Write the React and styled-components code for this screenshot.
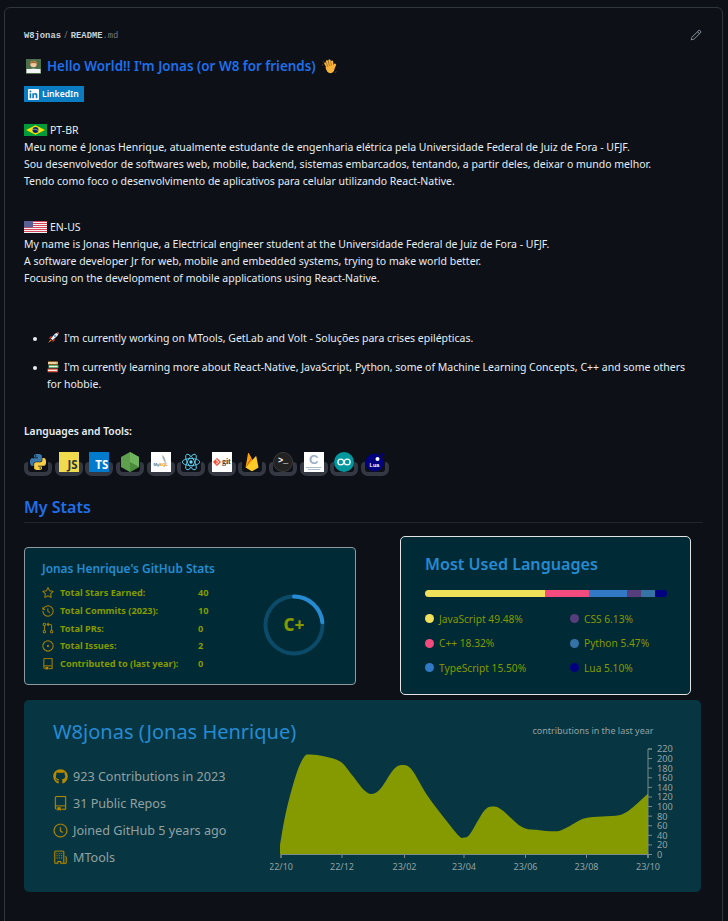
import React from "react";
import styled, { createGlobalStyle } from "styled-components";
import {
  GoStar,
  GoHistory,
  GoGitPullRequest,
  GoIssueOpened,
  GoRepo,
  GoClock,
  GoOrganization,
  GoPencil,
} from "react-icons/go";
import { FaGithub } from "react-icons/fa";
import { SiLinkedin, SiGit } from "react-icons/si";

const sans = `"Noto Sans", "Open Sans", "Liberation Sans", sans-serif`;

const Global = createGlobalStyle`
  html, body {
    margin: 0;
    padding: 0;
    height: 921px;
    overflow: hidden;
    background: #0d1117;
    color: #e6edf3;
    font-family: ${sans};
  }
`;

const Panel = styled.div`
  box-sizing: border-box;
  width: 719px;
  height: 960px;
  margin: 7px 0 0 4px;
  padding: 19px 19px 0 19px;
  border: 1px solid #30363d;
  border-radius: 6px;
`;

const FileBar = styled.div`
  display: flex;
  align-items: center;
  justify-content: space-between;
  height: 16px;
  padding-right: 1px;
  font-family: "Liberation Mono", monospace;
  font-size: 8.8px;
  color: #c9d1d9;
  svg {
    color: #8b949e;
    font-size: 12px;
  }
`;

const Crumb = styled.span`
  font-weight: 700;
  b {
    font-weight: 400;
    color: #6e7681;
  }
  i {
    font-family: ${sans};
    font-style: normal;
    font-weight: 400;
    color: #6e7681;
    padding: 0 1px;
  }
`;

const Title = styled.h1`
  display: flex;
  align-items: center;
  gap: 6px;
  margin: 13px 0 0 2px;
  height: 20px;
  font-size: 13.4px;
  font-weight: 600;
  color: #1f6feb;
`;

const Badge = styled.div`
  display: inline-flex;
  align-items: center;
  gap: 3px;
  box-sizing: border-box;
  width: 60px;
  height: 16px;
  margin-top: 10px;
  padding-left: 4px;
  background: #0a7cc1;
  color: #fff;
  font-size: 8.6px;
  font-weight: 600;
  svg {
    font-size: 11px;
  }
`;

const Block = styled.div`
  margin-top: ${(p) => p.$top}px;
  font-size: 10.5px;
  line-height: 17px;
  color: #e6edf3;
`;

const Line = styled.div`
  white-space: nowrap;
`;

const FlagLine = styled.div`
  display: flex;
  align-items: flex-end;
  gap: 3px;
  height: 17px;
  svg {
    margin-bottom: 3px;
  }
`;

const List = styled.ul`
  margin: 43px 0 0 0;
  padding: 0 14px 0 23px;
  font-size: 10.5px;
  line-height: 17px;
  li {
    margin-bottom: 12px;
  }
  li svg {
    vertical-align: -2px;
    margin-right: 5px;
  }
`;

const ToolsLabel = styled.div`
  margin-top: 30px;
  font-size: 10.3px;
  line-height: 17px;
  font-weight: 600;
  color: #e6edf3;
`;

const Tools = styled.div`
  display: flex;
  gap: 2.65px;
  margin-top: 12px;
`;

const Tool = styled.div`
  position: relative;
  width: 28px;
  height: 24px;
  display: flex;
  justify-content: center;
  &::before {
    content: "";
    position: absolute;
    left: 0;
    right: 0;
    top: 10px;
    bottom: 0;
    box-sizing: border-box;
    border: 4px solid #343842;
    border-top: none;
    border-radius: 4px 4px 7px 7px;
  }
`;

const Tile = styled.div`
  position: relative;
  box-sizing: border-box;
  width: 20px;
  height: 20px;
  display: flex;
  align-items: ${(p) => (p.$low ? "flex-end" : "center")};
  justify-content: ${(p) => (p.$low ? "flex-end" : "center")};
  padding: ${(p) => (p.$low ? "0 1px 0 0" : "0")};
  background: ${(p) => p.$bg};
  border-radius: ${(p) => (p.$round ? "50%" : "0")};
  color: ${(p) => p.$fg || "#fff"};
  font-size: ${(p) => p.$size || 10}px;
  font-weight: 700;
  line-height: ${(p) => (p.$low ? "14px" : "1")};
`;

const ToolSvg = styled.svg`
  position: relative;
  display: block;
  width: 20px;
  height: 20px;
`;

const Section = styled.h2`
  margin: 19px 0 0 0;
  padding-bottom: 3px;
  height: 24px;
  font-size: 16px;
  line-height: 24px;
  font-weight: 600;
  color: #1f6feb;
  border-bottom: 1px solid #21262d;
`;

const CardRow = styled.div`
  display: flex;
  align-items: flex-start;
  gap: 44px;
  margin-top: 13px;
`;

const StatsCard = styled.div`
  box-sizing: border-box;
  width: 332px;
  height: 138px;
  margin-top: 11px;
  padding: 13px 17px;
  display: flex;
  justify-content: space-between;
  background: #002b36;
  border: 1px solid #8d9a9f;
  border-radius: 4px;
`;

const CardTitle = styled.div`
  font-size: ${(p) => p.$size}px;
  font-weight: 600;
  line-height: 1.3;
  color: #268bd2;
  white-space: nowrap;
`;

const StatRows = styled.div`
  margin-top: 8px;
  display: grid;
  grid-template-columns: 18px 138px auto;
  grid-auto-rows: 17.7px;
  align-items: center;
  font-size: 9.2px;
  font-weight: 700;
  color: #859900;
  svg {
    color: #b58900;
    font-size: 12px;
    display: block;
    stroke: currentColor;
    stroke-width: 0.35;
  }
`;

const Ring = styled.div`
  position: relative;
  margin: 32px 12px 0 0;
  width: 64px;
  height: 64px;
`;

const Grade = styled.div`
  position: absolute;
  inset: 0;
  display: flex;
  align-items: center;
  justify-content: center;
  font-size: 17px;
  font-weight: 800;
  color: #859900;
`;

const LangCard = styled.div`
  box-sizing: border-box;
  width: 291px;
  height: 159px;
  padding: 17px 24px 0 24px;
  background: #002b36;
  border: 1px solid #e4e2e2;
  border-radius: 5px;
`;

const LangBar = styled.div`
  display: flex;
  width: 242px;
  height: 7px;
  margin-top: 16px;
  border-radius: 4px;
  overflow: hidden;
`;

const LangPart = styled.div`
  background: ${(p) => p.$color};
`;

const LangGrid = styled.div`
  display: grid;
  grid-template-columns: 145px auto;
  grid-auto-rows: 24.6px;
  margin-top: 9px;
  align-items: center;
`;

const LangItem = styled.div`
  display: flex;
  align-items: center;
  gap: 5px;
  font-size: 10.2px;
  color: #859900;
  white-space: nowrap;
`;

const Dot = styled.span`
  width: 9px;
  height: 9px;
  border-radius: 50%;
  background: ${(p) => p.$color};
`;

const ProfileCard = styled.div`
  display: flex;
  box-sizing: border-box;
  width: 677px;
  height: 192px;
  margin-top: 5px;
  padding: 20px 0 0 29px;
  background: #073642;
  border-radius: 5px;
`;

const ProfileInfo = styled.div`
  width: 217px;
  flex: none;
`;

const ProfileName = styled.div`
  font-size: 20px;
  line-height: 24px;
  color: #268bd2;
  white-space: nowrap;
`;

const ProfileRows = styled.div`
  margin-top: 19px;
`;

const ProfileRow = styled.div`
  display: flex;
  align-items: center;
  gap: 5px;
  height: 27px;
  font-size: 12.6px;
  color: #93a1a1;
  white-space: nowrap;
  svg {
    color: #b58900;
    font-size: 15px;
    flex: none;
    stroke: currentColor;
    stroke-width: 0.3;
  }
`;

const ChartSvg = styled.svg`
  display: block;
  flex: none;
  text {
    font-family: ${sans};
    fill: #93a1a1;
  }
`;

const PY_TOP =
  "M14.25.18l.9.2.73.26.59.3.45.32.34.34.25.34.16.33.1.3.04.26.02.2-.01.13V8.5l-.05.63-.13.55-.21.46-.26.38-.3.31-.33.25-.35.19-.35.14-.33.1-.3.07-.26.04-.21.02H8.77l-.69.05-.59.14-.5.22-.41.27-.33.32-.27.35-.2.36-.15.37-.1.35-.07.32-.04.27-.02.21v3.06H3.17l-.21-.03-.28-.07-.32-.12-.35-.18-.36-.26-.36-.36-.35-.46-.32-.59-.28-.73-.21-.88-.14-1.05-.05-1.23.06-1.22.16-1.04.24-.87.32-.71.36-.57.4-.44.42-.33.42-.24.4-.16.36-.1.32-.05.24-.01h.16l.06.01h8.16v-.83H6.18l-.01-2.75-.02-.37.05-.34.11-.31.17-.28.25-.26.31-.23.38-.2.44-.18.51-.15.58-.12.64-.1.71-.06.77-.04.84-.02 1.27.05zm-6.3 1.98l-.23.33-.08.41.08.41.23.34.33.22.41.09.41-.09.33-.22.23-.34.08-.41-.08-.41-.23-.33-.33-.22-.41-.09-.41.09z";
const PY_BOTTOM =
  "M21.04 6.11l.28.06.32.12.35.18.36.27.36.35.35.47.32.59.28.73.21.88.14 1.04.05 1.23-.06 1.23-.16 1.04-.24.86-.32.71-.36.57-.4.45-.42.33-.42.24-.4.16-.36.09-.32.05-.24.02-.16-.01h-8.22v.82h5.84l.01 2.76.02.36-.05.34-.11.31-.17.29-.25.25-.31.24-.38.2-.44.17-.51.15-.58.13-.64.09-.71.07-.77.04-.84.01-1.27-.04-1.07-.14-.9-.2-.73-.25-.59-.3-.45-.33-.34-.34-.25-.34-.16-.33-.1-.3-.04-.25-.02-.2.01-.13v-5.34l.05-.64.13-.54.21-.46.26-.38.3-.32.33-.24.35-.2.35-.14.33-.1.3-.06.26-.04.21-.02.13-.01h5.84l.69-.05.59-.14.5-.21.41-.28.33-.32.27-.35.2-.36.15-.36.1-.35.07-.32.04-.28.02-.21V6.07h2.09l.14.01zm-6.47 14.25l-.23.33-.08.41.08.41.23.33.33.23.41.08.41-.08.33-.23.23-.33.08-.41-.08-.41-.23-.33-.33-.23-.41-.08-.41.08z";

const CoderEmoji = () => (
  <svg width="15" height="15" viewBox="0 0 15 15">
    <rect width="15" height="15" fill="#4f6f4c" />
    <circle cx="7.5" cy="5" r="3.2" fill="#f3c99b" />
    <path d="M4 4.8C4.2 1.2 10.8 1.2 11 4.8 9.2 3.6 5.800 3.600 4 4.800z" fill="#a0682c" />
    <path d="M2 12C2.500 8.500 12.500 8.500 13 12z" fill="#c9ced4" />
    <rect x=".5" y="10" width="14" height="4" fill="#f2f4f7" />
  </svg>
);

const WaveEmoji = () => (
  <svg width="15" height="15" viewBox="0 0 15 15">
    <g stroke="#f7b23b" strokeWidth="2.3" strokeLinecap="round">
      <line x1="5.5" y1="8" x2="3.3" y2="4.5" />
      <line x1="7" y1="7" x2="5" y2="2.4" />
      <line x1="8.8" y1="6.5" x2="7.4" y2="1.5" />
      <line x1="10.5" y1="6.5" x2="10" y2="2.6" />
      <line x1="11.5" y1="9" x2="13" y2="5.8" />
    </g>
    <path d="M3.5 8 11.5 5.5C13 9 12.8 12 10.5 13.5 7.5 15.3 4.5 13.5 3.5 8z" fill="#f7b23b" />
    <path d="M4.4 4.5 6 8M6.1 3 7.6 7M8.7 2.8 9.4 6.8" stroke="#9c6417" strokeWidth=".6" fill="none" />
    <path d="M1 3.6 2 1.800M.8 6.800.3 5.200M12.800 14l1.600-1.800" stroke="#55402a" strokeWidth=".9" fill="none" />
  </svg>
);

const RocketEmoji = () => (
  <svg width="12" height="12" viewBox="0 0 12 12">
    <path d="M3.8 6.4 8 1.800c1-.8 2.400-1.300 3.600-1.400-.1 1.300-.6 2.600-1.400 3.600L5.600 8.200z" fill="#e8edf2" />
    <path d="M9.4.8c.9-.3 1.600-.4 2.200-.4 0 .7-.1 1.400-.4 2.200z" fill="#d93a30" />
    <circle cx="8" cy="4" r="1" fill="#4b8fd6" />
    <path d="M3.8 6.400 1.600 6.600 3.600 4.200 5.400 4.600zM5.600 8.200 5.400 10.400 7.800 8.400 7.400 6.600z" fill="#c9342b" />
    <path d="M3.6 7.400 1 11l3.600-2.600z" fill="#f2a12e" />
  </svg>
);

const BooksEmoji = () => (
  <svg width="12" height="12" viewBox="0 0 12 12">
    <rect x="1" y=".5" width="10" height="3" rx=".6" fill="#e8a33a" />
    <rect x="1" y="1.4" width="8.5" height="1.2" fill="#f5efe0" />
    <rect x="1.5" y="4" width="10" height="3" rx=".6" fill="#49a36a" />
    <rect x="2" y="4.9" width="8.5" height="1.2" fill="#f5efe0" />
    <rect x=".5" y="7.6" width="10.5" height="3.6" rx=".6" fill="#d9503f" />
    <rect x="1" y="8.7" width="9" height="1.3" fill="#f5efe0" />
  </svg>
);

const BrazilFlag = () => (
  <svg width="23" height="12" viewBox="0 0 23 12">
    <rect width="23" height="12" fill="#009b3a" />
    <polygon points="11.5,1.2 21,6 11.5,10.8 2,6" fill="#fedf00" />
    <circle cx="11.5" cy="6" r="3" fill="#002776" />
    <path d="M8.6 5.400c2-.5 4.200 0 5.800 1.300" stroke="#fff" strokeWidth=".5" fill="none" />
  </svg>
);

const UsFlag = () => (
  <svg width="23" height="12" viewBox="0 0 23 12">
    <rect width="23" height="12" fill="#f4f4f4" />
    {[0, 2, 4, 6, 8, 10].map((y) => (
      <rect key={y} y={y} width="23" height="1" fill="#d6455a" />
    ))}
    <rect width="9" height="6.4" fill="#5a5f94" />
  </svg>
);

const PythonLogo = () => (
  <ToolSvg viewBox="-3 -3 30 30">
    <path d={PY_TOP} fill="#3a78ab" />
    <path d={PY_BOTTOM} fill="#f7cf47" />
  </ToolSvg>
);

const NodeLogo = () => (
  <ToolSvg viewBox="0 0 20 20">
    <polygon points="10,0 19,5 19,15 10,20 1,15 1,5" fill="#5fa04e" />
    <polygon points="10,0 19,5 19,15 10,10" fill="#6fb35c" />
    <polygon points="10,10 19,15 10,20" fill="#4a8a3c" />
  </ToolSvg>
);

const MysqlLogo = () => (
  <ToolSvg viewBox="0 0 20 20">
    <rect width="20" height="20" fill="#fff" />
    <path d="M11 3c2 1 3.400 3.500 3.600 6.500l1.600 2.300-2.500-1.500C12.400 8 11.300 6 11 3z" fill="#a9adb3" />
    <text x="2.4" y="14" fontSize="4.4" fontWeight="700" fontFamily="Liberation Sans" fill="#4a7a9c">
      My
    </text>
    <text x="8" y="14" fontSize="4.4" fontWeight="700" fontFamily="Liberation Sans" fill="#e48e00">
      SQL
    </text>
  </ToolSvg>
);

const ReactLogo = () => (
  <ToolSvg viewBox="-12 -12 24 24">
    <circle r="2" fill="#61dafb" />
    <g stroke="#61dafb" strokeWidth="1" fill="none">
      <ellipse rx="10.5" ry="4.2" />
      <ellipse rx="10.5" ry="4.2" transform="rotate(60)" />
      <ellipse rx="10.5" ry="4.2" transform="rotate(120)" />
    </g>
  </ToolSvg>
);

const FirebaseLogo = () => (
  <ToolSvg viewBox="0 0 20 20">
    <path d="M3.500 15.500 6 1.500c.1-.5.7-.6.9-.2L9.500 6z" fill="#ffa000" />
    <path d="M3.500 15.500 9.500 6 11 8.800z" fill="#f57c00" />
    <path d="M3.500 15.500 13.500 4.400c.3-.3.8-.1.9.3l2.100 10.800L10.600 19c-.4.200-.9.200-1.200 0z" fill="#ffca28" />
  </ToolSvg>
);

const ArduinoLogo = () => (
  <ToolSvg viewBox="0 0 20 20">
    <circle cx="10" cy="10" r="10" fill="#00979d" />
    <g fill="none" stroke="#fff" strokeWidth="1.3">
      <circle cx="6.8" cy="10" r="2.9" />
      <circle cx="13.2" cy="10" r="2.9" />
    </g>
  </ToolSvg>
);

const LuaLogo = () => (
  <ToolSvg viewBox="0 0 20 20">
    <circle cx="9.5" cy="10.5" r="9" fill="#000080" />
    <circle cx="12.5" cy="7" r="2" fill="#fff" />
    <circle cx="17.5" cy="2.5" r="1.8" fill="#000080" />
    <text x="9.5" y="15" textAnchor="middle" fontSize="5.5" fontWeight="700" fontFamily="Liberation Sans" fill="#fff">
      Lua
    </text>
  </ToolSvg>
);

const GitTile = styled(Tile)`
  gap: 1px;
  color: #413934;
  font-size: 8px;
  font-family: "Liberation Serif", serif;
  svg {
    color: #f05033;
    font-size: 8px;
    flex: none;
  }
`;

const CTile = styled(Tile)`
  flex-direction: column;
  color: #9bafc6;
  font-size: 13px;
  font-family: "Liberation Sans", sans-serif;
`;

const TinyLine = styled.span`
  display: block;
  width: ${(p) => p.$w}px;
  height: 1px;
  margin: 1px 0 0;
  background: #a9bcd0;
`;

const TermTile = styled(Tile)`
  font-family: "Liberation Mono", monospace;
  border: 1px solid #3a3a3a;
`;

const tools = [
  <PythonLogo />,
  <Tile $bg="#f0db4f" $fg="#323330" $low $size={11.5}>JS</Tile>,
  <Tile $bg="#007acc" $fg="#fff" $low $size={11.5}>TS</Tile>,
  <NodeLogo />,
  <MysqlLogo />,
  <ReactLogo />,
  <GitTile $bg="#fff"><SiGit />git</GitTile>,
  <FirebaseLogo />,
  <TermTile $bg="#222" $round $size={8.5}>&gt;_</TermTile>,
  <CTile $bg="#fff">C<TinyLine $w={15} /><TinyLine $w={12} /></CTile>,
  <ArduinoLogo />,
  <LuaLogo />,
];

const stats = [
  [GoStar, "Total Stars Earned:", "40"],
  [GoHistory, "Total Commits (2023):", "10"],
  [GoGitPullRequest, "Total PRs:", "0"],
  [GoIssueOpened, "Total Issues:", "2"],
  [GoRepo, "Contributed to (last year):", "0"],
];

const langs = [
  ["JavaScript", 49.48, "#f1e05a"],
  ["C++", 18.32, "#f34b7d"],
  ["TypeScript", 15.5, "#3178c6"],
  ["CSS", 6.13, "#563d7c"],
  ["Python", 5.47, "#3572a5"],
  ["Lua", 5.1, "#000080"],
];

// chart sampled from the contributions curve, in page-like coordinates
const area = [
  [280, 845], [286, 812], [296, 775], [304, 757], [310, 754.5], [325, 756.5], [341, 762],
  [352, 775], [364, 790], [372, 794], [381, 788], [394, 769], [403, 765], [412, 770],
  [427, 795], [445, 819], [459, 836], [464, 837.5], [470, 834], [484, 811], [493, 806.5],
  [502, 810], [522, 827], [538, 830], [556, 831.3], [566, 828], [584, 818.5], [602, 816.5],
  [620, 815], [632, 808], [648, 793.5],
];

const curve = (pts) => {
  let d = `M${pts[0][0]} ${pts[0][1]}`;
  for (let i = 0; i < pts.length - 1; i++) {
    const p0 = pts[i - 1] || pts[i];
    const p1 = pts[i];
    const p2 = pts[i + 1];
    const p3 = pts[i + 2] || p2;
    d += `C${p1[0] + (p2[0] - p0[0]) / 6} ${p1[1] + (p2[1] - p0[1]) / 6} ${p2[0] - (p3[0] - p1[0]) / 6} ${p2[1] - (p3[1] - p1[1]) / 6} ${p2[0]} ${p2[1]}`;
  }
  return d;
};

const xTicks = [
  ["22/10", 281],
  ["22/12", 342],
  ["23/02", 404.5],
  ["23/04", 464],
  ["23/06", 525.5],
  ["23/08", 586.5],
  ["23/10", 648],
];

const yTicks = [0, 20, 40, 60, 80, 100, 120, 140, 160, 180, 200, 220];

const Chart = () => (
  <ChartSvg width="410" height="172" viewBox="270 720 410 172">
    <text x="593" y="734" fontSize="9" textAnchor="middle">contributions in the last year</text>
    <path d={`${curve(area)}L648 854.5L280 854.5Z`} fill="#859900" />
    <path d="M281 858V854.5H648V858M652 749H648V858" stroke="#7b8a8c" strokeWidth="1" fill="none" />
    {xTicks.map(([label, x]) => (
      <g key={label}>
        <line x1={x} x2={x} y1="854.5" y2="858" stroke="#7b8a8c" />
        <text x={x} y="870" fontSize="9" textAnchor="middle">{label}</text>
      </g>
    ))}
    {yTicks.map((v, i) => {
      const y = 854.5 - (i * (854.5 - 749)) / 11;
      return (
        <g key={v}>
          <line x1="648" x2="652" y1={y} y2={y} stroke="#7b8a8c" />
          <text x="657" y={y + 3.4} fontSize="9.2">{v}</text>
        </g>
      );
    })}
  </ChartSvg>
);

export default function App() {
  return (
    <>
      <Global />
      <Panel>
        <FileBar>
          <Crumb>W8jonas<i> / </i>README<b>.md</b></Crumb>
          <GoPencil />
        </FileBar>
        <Title>
          <CoderEmoji />
          <span>Hello World!! I'm Jonas (or W8 for friends)</span>
          <WaveEmoji />
        </Title>
        <Badge><SiLinkedin />LinkedIn</Badge>

        <Block $top={17}>
          <FlagLine><BrazilFlag />PT-BR</FlagLine>
          <Line>Meu nome é Jonas Henrique, atualmente estudante de engenharia elétrica pela Universidade Federal de Juiz de Fora - UFJF.</Line>
          <Line>Sou desenvolvedor de softwares web, mobile, backend, sistemas embarcados, tentando, a partir deles, deixar o mundo melhor.</Line>
          <Line>Tendo como foco o desenvolvimento de aplicativos para celular utilizando React-Native.</Line>
        </Block>

        <Block $top={29}>
          <FlagLine><UsFlag />EN-US</FlagLine>
          <Line>My name is Jonas Henrique, a Electrical engineer student at the Universidade Federal de Juiz de Fora - UFJF.</Line>
          <Line>A software developer Jr for web, mobile and embedded systems, trying to make world better.</Line>
          <Line>Focusing on the development of mobile applications using React-Native.</Line>
        </Block>

        <List>
          <li><RocketEmoji />I'm currently working on MTools, GetLab and Volt - Soluções para crises epilépticas.</li>
          <li><BooksEmoji />I'm currently learning more about React-Native, JavaScript, Python, some of Machine Learning Concepts, C++ and some others for hobbie.</li>
        </List>

        <ToolsLabel>Languages and Tools:</ToolsLabel>
        <Tools>
          {tools.map((logo, i) => (
            <Tool key={i}>{logo}</Tool>
          ))}
        </Tools>

        <Section>My Stats</Section>

        <CardRow>
          <StatsCard>
            <div>
              <CardTitle $size={11.9}>Jonas Henrique's GitHub Stats</CardTitle>
              <StatRows>
                {stats.map(([Icon, label, value]) => (
                  <React.Fragment key={label}>
                    <Icon />
                    <span>{label}</span>
                    <span>{value}</span>
                  </React.Fragment>
                ))}
              </StatRows>
            </div>
            <Ring>
              <svg width="64" height="64" viewBox="0 0 64 64">
                <circle cx="32" cy="32" r="28.5" fill="none" stroke="#0b4a68" strokeWidth="4" />
                <circle
                  cx="32"
                  cy="32"
                  r="28.5"
                  fill="none"
                  stroke="#268bd2"
                  strokeWidth="4"
                  strokeLinecap="round"
                  strokeDasharray="42 200"
                  transform="rotate(-90 32 32)"
                />
              </svg>
              <Grade>C+</Grade>
            </Ring>
          </StatsCard>

          <LangCard>
            <CardTitle $size={16.1}>Most Used Languages</CardTitle>
            <LangBar>
              {langs.map(([name, pct, c]) => (
                <LangPart key={name} $color={c} style={{ width: `${pct}%` }} />
              ))}
            </LangBar>
            <LangGrid>
              {[0, 3, 1, 4, 2, 5].map((i) => (
                <LangItem key={langs[i][0]}>
                  <Dot $color={langs[i][2]} />
                  {langs[i][0]} {langs[i][1].toFixed(2)}%
                </LangItem>
              ))}
            </LangGrid>
          </LangCard>
        </CardRow>

        <ProfileCard>
          <ProfileInfo>
            <ProfileName>W8jonas (Jonas Henrique)</ProfileName>
            <ProfileRows>
              <ProfileRow><FaGithub />923 Contributions in 2023</ProfileRow>
              <ProfileRow><GoRepo />31 Public Repos</ProfileRow>
              <ProfileRow><GoClock />Joined GitHub 5 years ago</ProfileRow>
              <ProfileRow><GoOrganization />MTools</ProfileRow>
            </ProfileRows>
          </ProfileInfo>
          <Chart />
        </ProfileCard>
      </Panel>
    </>
  );
}
